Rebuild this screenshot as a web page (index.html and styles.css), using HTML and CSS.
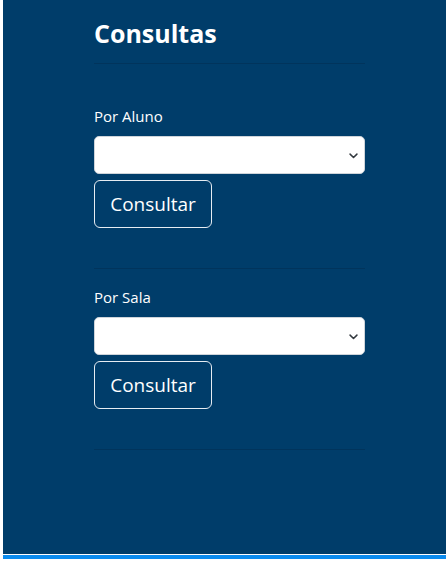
FILE: index.html
```html
<!DOCTYPE html>
<html lang="pt">
<head>
<meta charset="utf-8">
<link rel="stylesheet" href="styles.css">
</head>
<body>
<div class="page">
  <main class="panel">
    <div class="content">
      <h1 class="title">Consultas</h1>
      <hr class="rule">
      <form class="query first">
        <label class="label" for="aluno">Por Aluno</label>
        <select class="select" id="aluno"><option></option></select>
        <button type="button" class="btn">Consultar</button>
      </form>
      <hr class="rule">
      <form class="query">
        <label class="label" for="sala">Por Sala</label>
        <select class="select" id="sala"><option></option></select>
        <button type="button" class="btn">Consultar</button>
      </form>
      <hr class="rule">
    </div>
  </main>
  <div class="stripe"></div>
</div>
</body>
</html>
```
FILE: styles.css
```css
html, body {
  margin: 0;
  padding: 0;
  background: #ffffff;
  font-family: "Open Sans", "Noto Sans", sans-serif;
}
.page {
  width: 446px;
  height: 561px;
  display: flex;
  flex-direction: column;
}
.panel {
  margin-left: 3px;
  height: 554px;
  background: #003d6a;
  color: #ffffff;
}
.stripe {
  margin-top: 1px;
  margin-left: 3px;
  height: 4px;
  background: #0a8bef;
}
.content {
  width: 271px;
  margin-left: 91px;
  padding-top: 16px;
}
.title {
  margin: 0;
  font-size: 25px;
  font-weight: 700;
  line-height: 34px;
}
.rule {
  margin: 13px 0 0 0;
  border: 0;
  border-top: 1px solid #01345c;
  height: 0;
}
.query {
  display: flex;
  flex-direction: column;
  align-items: flex-start;
  padding: 18px 0 27px;
}
.query.first {
  padding-top: 42px;
}
.label {
  font-size: 15px;
  line-height: 20px;
  margin-bottom: 10px;
}
.select {
  appearance: none;
  -webkit-appearance: none;
  width: 271px;
  height: 38px;
  border: 1px solid #ced4da;
  border-radius: 5px;
  background: #ffffff url("data:image/svg+xml,%3Csvg xmlns='http://www.w3.org/2000/svg' viewBox='0 0 16 16'%3E%3Cpath fill='none' stroke='%23343a40' stroke-linecap='round' stroke-linejoin='round' stroke-width='2.2' d='M3 6l5 5 5-5'/%3E%3C/svg%3E") no-repeat right 5px center / 11px 11px;
  margin: 0 0 6px 0;
}
.btn {
  font-family: inherit;
  font-size: 19px;
  color: #ffffff;
  background: transparent;
  border: 1px solid #e6ecf2;
  border-radius: 6px;
  width: 118px;
  height: 48px;
  padding: 0;
}
```
